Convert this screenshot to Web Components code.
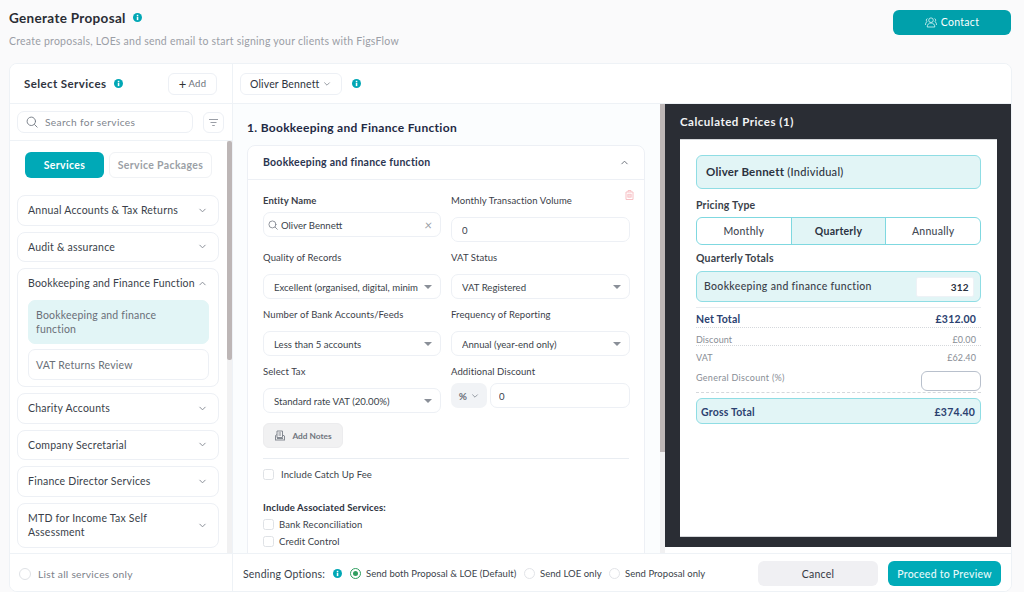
<!DOCTYPE html>
<html lang="en"><head><meta charset="utf-8"><title>Generate Proposal</title>
<style>
html,body{margin:0;height:592px;overflow:hidden;background:#fafafb;font-family:Lato,"Liberation Sans",sans-serif;color:#2b3240}
</style></head><body>
<fp-app></fp-app>
<script>
const chev=(up,c='#8a8f98',s=9)=>`<svg width="${s}" height="${s}" viewBox="0 0 10 10" fill="none" stroke="${c}" stroke-width="1.1" stroke-linecap="round" stroke-linejoin="round"><path d="${up?'M2 6.5 5 3.5 8 6.5':'M2 3.5 5 6.5 8 3.5'}"/></svg>`;
const search=(s=12)=>`<svg width="${s}" height="${s}" viewBox="0 0 14 14" fill="none" stroke="#767c86" stroke-width="1.1" stroke-linecap="round"><circle cx="6.2" cy="6.2" r="4.9"/><path d="M10 10l3 3"/></svg>`;
class Base extends HTMLElement{
  connectedCallback(){ if(this.shadowRoot) return; this.attachShadow({mode:'open'}).innerHTML=`<style>*{box-sizing:border-box}${this.constructor.css||''}</style>${this.html()}`; }
  html(){return '<slot></slot>'}
  a(n,d=''){return this.getAttribute(n)??d}
}
const def=(n,c,h)=>{ const K=class extends Base{html(){return h.call(this)}}; K.css=c; customElements.define(n,K); };

def('fp-info',`:host{display:inline-flex;width:9px;height:9px;flex:none}`,()=>`<svg width="9" height="9" viewBox="0 0 10 10"><circle cx="5" cy="5" r="5" fill="#00a7b5"/><rect x="4.2" y="4.3" width="1.7" height="3.6" fill="#fff"/><rect x="4.2" y="2" width="1.7" height="1.6" fill="#fff"/></svg>`);

def('fp-header',`:host{display:flex;justify-content:space-between;height:63px;padding:9.5px 13px 0 9px}
h1{margin:1px 0 0;font-size:13.5px;line-height:14px;font-weight:700;color:#2a2d34;letter-spacing:.32px;display:flex;align-items:center;gap:7px}
p{margin:10px 0 0;font-size:10.5px;line-height:13px;color:#9a9ea6;letter-spacing:.24px}
button{all:unset;box-sizing:border-box;width:118px;height:25px;border-radius:6px;background:#00a0ab;color:#fff;font-size:10.5px;letter-spacing:.3px;display:flex;align-items:center;justify-content:center;gap:4px}`,
()=>`<div><h1>Generate Proposal <fp-info></fp-info></h1><p>Create proposals, LOEs and send email to start signing your clients with FigsFlow</p></div>
<button><svg width="12" height="11" viewBox="0 0 12 11" fill="none" stroke="#dff5f6" stroke-width=".8"><circle cx="6" cy="3.2" r="2.3"/><path d="M2.2 10c0-2.6 1.6-4 3.8-4s3.8 1.4 3.8 4z"/><path d="M2.5 1.6a1.7 1.7 0 0 0-.4 3.1C1 5.2.5 6.3.5 8M9.500 1.600a1.700 1.700 0 0 1 .4 3.100c1.100.5 1.600 1.600 1.600 3.300"/></svg>Contact</button>`);

def('fp-acc',`:host{display:block;border:1px solid #edf0f5;border-radius:8px;background:#fff;margin-bottom:6px;padding:0 9px 0 10px}
.t{display:flex;align-items:center;justify-content:space-between;gap:0;font-size:10.5px;line-height:14.5px;color:#3a3f4a;letter-spacing:.22px;padding:7px 0 7px}
.t svg{flex:none;margin-right:2px}:host([open]){padding-bottom:6px}
:host([open]) .t span{white-space:nowrap;letter-spacing:.18px}`,
function(){const o=this.hasAttribute('open');return `<div class="t"><span>${this.a('label')}</span>${chev(o)}</div><slot></slot>`});

def('fp-sub',`:host{display:block;border:1px solid #edf0f5;border-radius:7px;padding:7.5px 8px 7.5px 7px;font-size:10.5px;line-height:14px;color:#6a6f78;letter-spacing:.2px;margin-top:5px;background:#fff}
:host([sel]){background:#e2f5f6;border-color:#e2f5f6;margin-top:2.5px;padding:7px 40px 7px 7px;line-height:14px}`,()=>`<slot></slot>`);

def('fp-services',`:host{display:flex;flex-direction:column;width:223px;flex:none;border-right:1px solid #eef2f6;height:100%;background:#fff}
.h{height:40px;flex:none;border-bottom:1px solid #eef2f6;display:flex;align-items:center;padding:0 15px 0 14px;gap:8px}
.h b{font-size:11.5px;font-weight:700;letter-spacing:.4px;color:#2f3440}
.add{margin-left:auto;width:49px;height:22px;border:1px solid #edf0f5;border-radius:6px;font-size:9.5px;color:#6d727b;display:flex;align-items:center;justify-content:center;gap:2px;letter-spacing:.2px}
.add i{font-style:normal;font-size:13px;line-height:12px;color:#333}
.s{height:37px;flex:none;border-bottom:1px solid #eef2f6;display:flex;align-items:center;padding:0 8px 0 7px;gap:10px}
.in{width:176px;height:22px;border:1px solid #edf0f5;border-radius:7px;display:flex;align-items:center;gap:7px;padding:0 8px;font-size:10.2px;color:#80858e;letter-spacing:.35px}
.f{width:21px;height:21px;border:1px solid #edf0f5;border-radius:6px;display:flex;align-items:center;justify-content:center}
.b{flex:1;min-height:0;display:flex;overflow:hidden}
.l{flex:1;min-width:0;padding:11px 8px 0 7px;overflow:hidden}
.sb{width:5px;flex:none;background:#f1f1f2}.sb div{height:219px;background:#bdb6b6;border-radius:2px}
.tabs{display:flex;gap:5px;margin:0 0 17px 8px}
.tabs span{height:26px;border-radius:6px;display:flex;align-items:center;justify-content:center;font-size:10.5px;letter-spacing:.35px}
.on{width:79px;background:#00a9b7;color:#fff;font-weight:700}.off{width:103px;border:1px solid #f0f2f5;color:#9b9fa6;font-weight:700}
.ft{height:38px;flex:none;border-top:1px solid #eef2f6;display:flex;align-items:center;padding:2px 9px 0;gap:7px;font-size:10.3px;color:#7c818a;letter-spacing:.25px}
.r{width:12px;height:12px;border:1px solid #dfe2e6;border-radius:50%}`,
()=>`<div class="h"><b>Select Services</b><fp-info></fp-info><div class="add"><i>+</i>Add</div></div>
<div class="s"><div class="in">${search()}<span>Search for services</span></div><div class="f"><svg width="11" height="9" viewBox="0 0 11 9" stroke="#9a9ea6" stroke-width="1.1"><path d="M1 1.5h9M2.5 4.5h6M4.2 7.5h2.6"/></svg></div></div>
<div class="b"><div class="l"><div class="tabs"><span class="on">Services</span><span class="off">Service Packages</span></div>
<fp-acc label="Annual Accounts &amp; Tax Returns"></fp-acc>
<fp-acc label="Audit &amp; assurance"></fp-acc>
<fp-acc label="Bookkeeping and Finance Function" open><fp-sub sel>Bookkeeping and finance function</fp-sub><fp-sub>VAT Returns Review</fp-sub></fp-acc>
<fp-acc label="Charity Accounts"></fp-acc>
<fp-acc label="Company Secretarial"></fp-acc>
<fp-acc label="Finance Director Services"></fp-acc>
<fp-acc label="MTD for Income Tax Self Assessment"></fp-acc>
</div><div class="sb"><div></div></div></div>
<div class="ft"><span class="r"></span>List all services only</div>`);

def('fp-field',`:host{display:block;font-size:9.5px;letter-spacing:.1px;color:#3b4049}
label{display:block;line-height:12px;height:12px}:host([strong]) label{font-weight:700}
.c{margin-top:var(--gap,10px);height:25px;border:1px solid #edf0f5;border-radius:7px;background:#fff;display:flex;align-items:center;padding:0 8px 0 10px;font-size:9.6px;letter-spacing:0;color:#3a3f4a;gap:4px;overflow:hidden}
.c span{flex:1;white-space:nowrap;overflow:hidden;min-width:0;padding-top:1px}
.tri{width:0;height:0;border:4px solid transparent;border-top:4px solid #8a8f98;border-bottom:0;flex:none;margin-right:0}
.x{color:#9a9ea6;font-size:13px;line-height:10px;flex:none}
.pre{width:36px;height:25px;background:#f1f3f6;border-radius:7px;display:flex;align-items:center;justify-content:center;gap:4px;font-weight:700;color:#6a6f78;flex:none;font-size:10px}
.row{display:flex;gap:3px;margin-top:var(--gap,10px)}.row .c{margin:0;flex:1;padding-left:8px}`,
function(){const t=this.a('type','select'),v=this.a('value'),l=this.a('label');
 let b='';
 if(t==='select') b=`<div class="c"><span>${v}</span><i class="tri"></i></div>`;
 if(t==='text') b=`<div class="c"><span>${v}</span></div>`;
 if(t==='entity') b=`<div class="c" style="padding-left:4px;margin-top:5px;gap:3px">${search(10)}<span>${v}</span><i class="x">×</i></div>`;
 if(t==='discount') b=`<div class="row"><div class="pre">%${chev(false,'#8a8f98',8)}</div><div class="c"><span>${v}</span></div></div>`;
 return `<label>${l}</label>${b}`});

def('fp-check',`:host{display:flex;align-items:center;font-size:9.5px;letter-spacing:.1px;color:#3a3f4a;gap:var(--g,5px);height:12px}
i{width:11px;height:11px;border:1px solid #dfe2e6;border-radius:2.5px;background:#fff;flex:none}`,()=>`<i></i><slot></slot>`);

def('fp-proposal',`:host{display:block;width:427px;flex:none;background:#fbfdfe;padding:17px 15px 0 14px;overflow:hidden;height:449px}
h2{margin:0 0 11px;font-size:12px;line-height:13px;font-weight:700;color:#1f2a44;letter-spacing:.3px}
.card{border:1px solid #edf0f5;border-radius:8px 8px 0 0;background:#fff;height:420px}
.ch{height:34px;border-bottom:1px solid #edf0f5;display:flex;align-items:center;justify-content:space-between;padding:0 15px 1px;font-size:10.5px;font-weight:700;color:#2b3550;letter-spacing:.25px}
.bd{padding:15px 15px 0;position:relative}
.tr{position:absolute;right:10px;top:10px}
.g{display:grid;grid-template-columns:178px 179px;column-gap:10px;row-gap:10px}
.notes{margin-top:10px;width:80px;height:25px;border-radius:6px;background:#f1f1f2;border:1px solid #ececee;display:flex;align-items:center;justify-content:center;gap:6px;font-size:8.3px;font-weight:700;color:#70757e}
hr{border:0;border-top:1px solid #e9edf2;margin:10px 0 9px}
.assoc{margin:22px 0 4px;font-size:9.5px;line-height:12px;font-weight:700;color:#2d3240;letter-spacing:.15px}
fp-check+fp-check{margin-top:5px}`,
()=>`<h2>1. Bookkeeping and Finance Function</h2><div class="card"><div class="ch"><span>Bookkeeping and finance function</span>${chev(true,'#6f747d')}</div>
<div class="bd"><svg class="tr" width="9" height="10" viewBox="0 0 9 10" fill="none" stroke="#f7c0c4" stroke-width="1"><path d="M1 2h7v7.500H1zM3 2V.6h3V2"/><rect x="2.800" y="4.200" width="3.400" height="3" fill="#fbdcdf" stroke-width=".8"/></svg>
<div class="g">
<fp-field strong label="Entity Name" type="entity" value="Oliver Bennett"></fp-field>
<fp-field label="Monthly Transaction Volume" type="text" value="0"></fp-field>
<fp-field label="Quality of Records" value="Excellent (organised, digital, minim"></fp-field>
<fp-field label="VAT Status" value="VAT Registered"></fp-field>
<fp-field label="Number of Bank Accounts/Feeds" value="Less than 5 accounts"></fp-field>
<fp-field label="Frequency of Reporting" value="Annual (year-end only)"></fp-field>
<fp-field label="Select Tax" value="Standard rate VAT (20.00%)"></fp-field>
<fp-field label="Additional Discount" type="discount" value="0" style="--gap:5px"></fp-field>
</div>
<div class="notes"><svg width="12" height="11" viewBox="0 0 12 11" fill="none" stroke="#858a92" stroke-width="1"><path d="M3 1h5.500v6.500H3zM1 10h10M1.500 10V5.500l1.500-1M10.500 10V6L8.500 5M4.500 3h2.500M4.500 5h2.500M3 8.500h6"/></svg>Add Notes</div>
<hr>
<fp-check style="--g:7px">Include Catch Up Fee</fp-check>
<div class="assoc">Include Associated Services:</div>
<fp-check>Bank Reconciliation</fp-check><fp-check>Credit Control</fp-check>
</div></div>`);

def('fp-prices',`:host{display:block;width:346px;flex:none;height:449px;background:#fff}
.dk{height:443px;background:#2a2d34;padding:0 14px 10px 15px;display:flex;flex-direction:column}
.tt{height:35px;display:flex;align-items:center;font-size:11.5px;font-weight:700;color:#f2f3f5;letter-spacing:.5px;flex:none}
.w{flex:1;background:#fff;padding:15px 16px 0;border:1px solid #d5d7da;border-width:1px 0}
.nm{height:34px;background:#e2f5f6;border:1px solid #8fdde4;border-radius:6px;display:flex;align-items:center;padding:0 9px 2px;font-size:11.5px;font-weight:700;color:#2b3240;gap:3px;letter-spacing:.22px}
.nm small{font-size:11px;font-weight:500;letter-spacing:.3px}
.lb{font-size:10.5px;font-weight:700;color:#3a3f4a;letter-spacing:.2px;line-height:12px}
.seg{display:flex;height:28px;border:1px solid #7fd8e0;border-radius:6px;margin:6px 0 7px;overflow:hidden;font-size:10.5px;color:#444a55;letter-spacing:.25px;font-weight:500}
.seg span{flex:1;display:flex;align-items:center;justify-content:center}
.seg .m{background:#e2f5f6;border:solid #7fd8e0;border-width:0 1px;font-weight:700;color:#2b3240}
.row{height:31px;background:#e2f5f6;border:1px solid #8fdde4;border-radius:6px;display:flex;align-items:center;justify-content:space-between;padding:0 6px 2px 7px;font-size:10.5px;color:#3a3f4a;letter-spacing:.32px;font-weight:500;margin-top:7px}
.row i{font-style:normal;width:58px;height:20px;background:#fff;border:1px solid #eef2f6;border-radius:2px;display:flex;align-items:center;justify-content:flex-end;padding-right:4px;font-weight:700;color:#2b3240;font-size:10px;position:relative;top:1px}
hr{border:0;border-top:1px solid #e8ecf0;margin:5px 0 0}
.ln{display:flex;justify-content:space-between;padding-right:5px;font-size:9px;color:#888d95;align-items:center;letter-spacing:.1px}
.nt{height:20px;font-size:10.5px;font-weight:700;color:#2b4170;border-bottom:1px dotted #d5d8dc;letter-spacing:.2px;padding-top:2px}
.ds{height:18px;border-bottom:1px dotted #d5d8dc;padding-top:5px}.vt{height:20px;padding-top:3px}
.gd{height:27px;padding:0;border-bottom:1px dashed #d5d8dc;align-items:flex-start;letter-spacing:.3px}
.gd i{width:60px;height:20px;border:1px solid #b8c0cc;border-radius:6px;display:block;margin-top:5px}
.gd span{padding-top:6px}
.gt{height:26px;margin-top:5px;background:#e2f5f6;border:1px solid #8fdde4;border-radius:6px;display:flex;align-items:center;justify-content:space-between;padding:1px 5px 0 4px;font-size:10.5px;font-weight:700;color:#2b4170;letter-spacing:.2px}`,
()=>`<div class="dk"><div class="tt">Calculated Prices (1)</div><div class="w">
<div class="nm">Oliver Bennett <small>(Individual)</small></div>
<div class="lb" style="margin-top:10px">Pricing Type</div>
<div class="seg"><span>Monthly</span><span class="m">Quarterly</span><span>Annually</span></div>
<div class="lb">Quarterly Totals</div>
<div class="row">Bookkeeping and finance function<i>312</i></div><hr>
<div class="ln nt"><span>Net Total</span><span>£312.00</span></div>
<div class="ln ds"><span>Discount</span><span>£0.00</span></div>
<div class="ln vt"><span>VAT</span><span>£62.40</span></div>
<div class="ln gd" style="padding-right:0"><span>General Discount (%)</span><i></i></div>
<div class="gt"><span>Gross Total</span><span>£374.40</span></div>
</div></div>`);

def('fp-radio',`:host{display:inline-flex;align-items:center;gap:5px;font-size:9.5px;color:#3a3f4a;letter-spacing:.04px;white-space:nowrap;flex:none}
i{width:11px;height:11px;border-radius:50%;border:1px solid #e2e4e8;flex:none;display:flex;align-items:center;justify-content:center}
:host([on]) i{border-color:#2f9e5f}:host([on]) i::after{content:"";width:5px;height:5px;border-radius:50%;background:#2f9e5f}`,()=>`<i></i><slot></slot>`);

def('fp-footer',`:host{display:flex;align-items:center;height:38px;border-top:1px solid #eef2f6;background:#fff;padding:2px 10px 0 10px;flex:none}
.l{font-size:10.5px;color:#3a3f4a;letter-spacing:.2px;width:81px;white-space:nowrap;margin-right:9px}
fp-info{margin-right:8px}
.sp{flex:1}
button{all:unset;box-sizing:border-box;height:25px;border-radius:6px;display:flex;align-items:center;justify-content:center;font-size:10.5px;letter-spacing:.25px}
.c{width:120px;background:#f0f0f3;color:#343842;margin-right:10px}.p{width:113px;background:#00abb8;color:#e6fafb;font-weight:500}`,
()=>`<span class="l">Sending Options:</span><fp-info></fp-info><fp-radio on style="width:174px">Send both Proposal &amp; LOE (Default)</fp-radio><fp-radio style="width:85px">Send LOE only</fp-radio><fp-radio>Send Proposal only</fp-radio><span class="sp"></span><button class="c">Cancel</button><button class="p">Proceed to Preview</button>`);

def('fp-workspace',`:host{display:flex;flex-direction:column;flex:1;min-width:0;height:100%}
.h{height:40px;flex:none;border-bottom:1px solid #eef2f6;display:flex;align-items:center;padding:0 0 0 7px;gap:10px;background:#fff}
.cl{height:22px;width:102px;border:1px solid #edf0f5;border-radius:6px;display:flex;align-items:center;padding-left:9px;gap:3px;font-size:10.5px;color:#2f3440;letter-spacing:.15px}
.m{display:flex;flex:1;min-height:0}
.sb{width:5px;flex:none;background:#f1f1f2;height:449px}.sb div{height:348px;background:#bdb6b6}`,
()=>`<div class="h"><div class="cl">Oliver Bennett ${chev(false,'#8a8f98',8)}</div><fp-info></fp-info></div>
<div class="m"><fp-proposal></fp-proposal><div class="sb"><div></div></div><fp-prices></fp-prices></div><fp-footer></fp-footer>`);

def('fp-app',`:host{display:block;height:592px}
.card{margin:0 12px 0 9px;height:529px;border:1px solid #eef2f6;border-radius:8px;background:#fff;display:flex;overflow:hidden}`,
()=>`<fp-header></fp-header><div class="card"><fp-services></fp-services><fp-workspace></fp-workspace></div>`);
</script>
</body></html>
